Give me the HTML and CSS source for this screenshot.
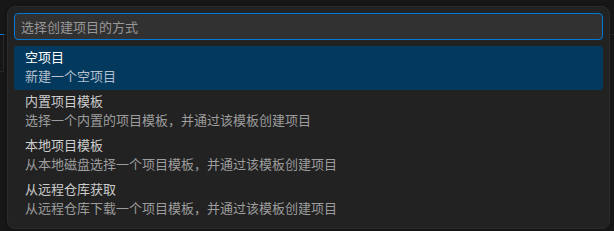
FILE: index.html
```html
<!DOCTYPE html>
<html lang="zh-CN">

<head>
    <meta charset="UTF-8">
    <meta name="viewport" content="width=device-width, initial-scale=1.0">
    <title>选择创建项目的方式</title>
    <link rel="stylesheet" href="styles.css">
</head>

<body>
    <!-- editor behind the quick pick -->
    <div class="editor">
        <div class="editor-tabs">
            <div class="tab-left"></div>
        </div>
        <div class="editor-bar"></div>
    </div>

    <div class="quick-pick">
        <div class="quick-input">选择创建项目的方式</div>
        <div class="pick-list">
            <div class="pick-item selected">
                <div class="pick-title">空项目</div>
                <div class="pick-desc">新建一个空项目</div>
            </div>
            <div class="pick-item">
                <div class="pick-title">内置项目模板</div>
                <div class="pick-desc">选择一个内置的项目模板，并通过该模板创建项目</div>
            </div>
            <div class="pick-item">
                <div class="pick-title">本地项目模板</div>
                <div class="pick-desc">从本地磁盘选择一个项目模板，并通过该模板创建项目</div>
            </div>
            <div class="pick-item">
                <div class="pick-title">从远程仓库获取</div>
                <div class="pick-desc">从远程仓库下载一个项目模板，并通过该模板创建项目</div>
            </div>
        </div>
    </div>
</body>

</html>
```

FILE: styles.css
```css
html,
body {
    margin: 0;
    height: 100%;
}

body {
    font-family: "Noto Sans CJK SC", "Noto Sans", sans-serif;
    font-size: 13px;
    background-color: #181818;
    color: #cccccc;
    position: relative;
    overflow: hidden;
}

.editor {
    height: 100%;
}

.editor-tabs {
    height: 34px;
    border-bottom: 1px solid #2b2b2b;
}

.tab-left {
    width: 4px;
    height: 34px;
    border-bottom: 1px solid #0078d4;
}

.editor-bar {
    width: 3px;
    height: 36px;
    border-right: 1px solid #2b2b2b;
    border-bottom: 1px solid #2b2b2b;
}

.quick-pick {
    position: absolute;
    left: 7px;
    top: 6px;
    width: 589px;
    padding: 6px;
    background: #222222;
    border: 1px solid #2b2b2b;
    border-radius: 8px;
    box-shadow: 0 0 8px rgba(0, 0, 0, 0.36);
}

.quick-input {
    height: 25px;
    line-height: 25px;
    padding: 0 6px;
    background: #313131;
    border: 1px solid #0078d4;
    border-radius: 4px;
    color: #989898;
}

.pick-list {
    margin-top: 6px;
}

.pick-item {
    height: 44px;
    padding: 1px 11px 0;
    box-sizing: border-box;
    border-radius: 3px;
}

.pick-title {
    line-height: 19px;
    color: #cccccc;
}

.pick-desc {
    line-height: 19px;
    color: #9d9d9d;
}

.pick-item.selected {
    background: #04395e;
}

.pick-item.selected .pick-title {
    color: #ffffff;
}

.pick-item.selected .pick-desc {
    color: #b4c0cb;
}
```
